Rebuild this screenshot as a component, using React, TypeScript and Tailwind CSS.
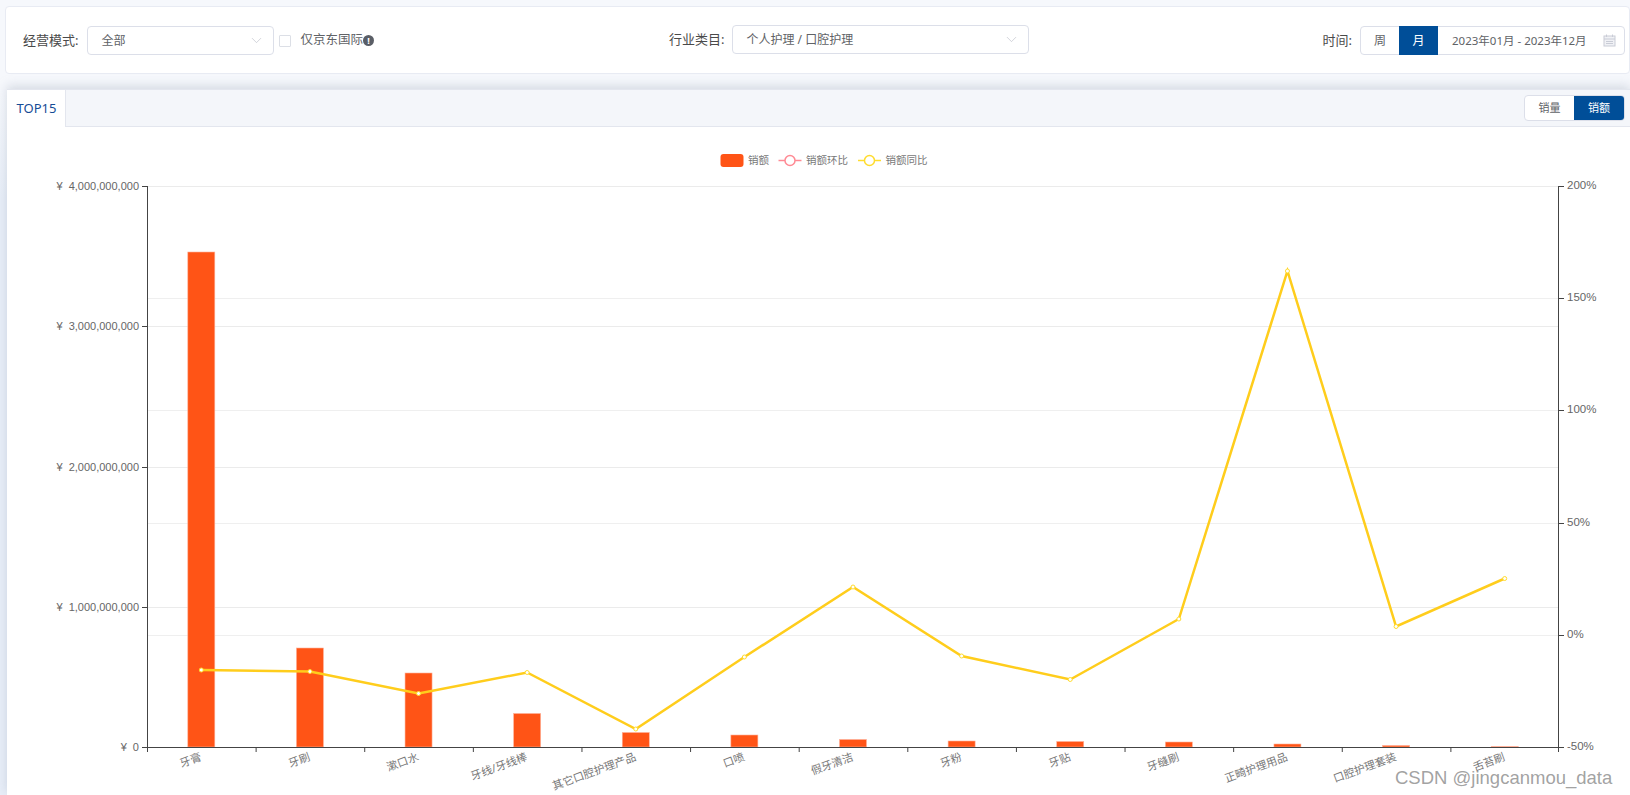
import { ChevronDown } from "lucide-react";

const cjk = `"Noto Sans", "Noto Sans CJK SC", sans-serif`;
const latin = `"Liberation Sans", "Noto Sans CJK SC", sans-serif`;

const plot = { left: 147, right: 1559, top: 186, bottom: 747 };
const leftStep = (plot.bottom - plot.top) / 4;
const rightStep = (plot.bottom - plot.top) / 5;

const categories = [
  { name: "牙膏", barTop: 252, y: 670 },
  { name: "牙刷", barTop: 648, y: 671.5 },
  { name: "漱口水", barTop: 673, y: 693.5 },
  { name: "牙线/牙线棒", barTop: 713.5, y: 672.5 },
  { name: "其它口腔护理产品", barTop: 732.5, y: 729 },
  { name: "口喷", barTop: 735, y: 657 },
  { name: "假牙清洁", barTop: 739.5, y: 587 },
  { name: "牙粉", barTop: 741, y: 656 },
  { name: "牙贴", barTop: 741.5, y: 679.5 },
  { name: "牙缝刷", barTop: 742, y: 619 },
  { name: "正畸护理用品", barTop: 744, y: 271 },
  { name: "口腔护理套装", barTop: 745.5, y: 626.5 },
  { name: "舌苔刷", barTop: 746.5, y: 578.5 },
];

const leftTicks = ["4,000,000,000", "3,000,000,000", "2,000,000,000", "1,000,000,000", "0"];
const rightTicks = ["200%", "150%", "100%", "50%", "0%", "-50%"];

function SalesChart() {
  const step = (plot.right - plot.left) / categories.length;
  const points = categories.map((c, i) => ({ x: plot.left + step * (i + 0.5), y: c.y }));

  return (
    <svg width="1630" height="668" viewBox="0 127 1630 668" style={{ fontFamily: cjk }}>
      {/* legend */}
      <rect x="720.5" y="154" width="23" height="13" rx="3" fill="#ff5416" />
      <text x="748" y="163.5" fontSize="10.5" fill="#777">销额</text>
      <path d="M778.5 160.5h23" stroke="#ff8a94" strokeWidth="1.5" />
      <circle cx="790" cy="160.5" r="5" fill="#fff" stroke="#ff8a94" strokeWidth="1.5" />
      <text x="806" y="163.5" fontSize="10.5" fill="#777">销额环比</text>
      <path d="M858 160.5h23" stroke="#ffdc2e" strokeWidth="1.5" />
      <circle cx="869.5" cy="160.5" r="5" fill="#fff" stroke="#ffdc2e" strokeWidth="1.5" />
      <text x="885.5" y="163.5" fontSize="10.5" fill="#777">销额同比</text>

      {/* grid */}
      {leftTicks.map((_, i) => {
        const y = Math.round(plot.top + i * leftStep) + 0.5;
        return i < 4 ? <path key={i} d={`M${plot.left} ${y}H${plot.right}`} stroke="#ebebeb" /> : null;
      })}
      {rightTicks.map((_, i) => {
        const y = Math.round(plot.top + i * rightStep) + 0.5;
        return i > 0 && i < 5 ? <path key={i} d={`M${plot.left} ${y}H${plot.right}`} stroke="#efefef" /> : null;
      })}

      {/* bars */}
      {categories.map((c, i) => (
        <rect
          key={c.name}
          x={plot.left + step * (i + 0.5) - 13.5}
          y={c.barTop}
          width="27"
          height={plot.bottom - c.barTop}
          fill="#ff5416"
          stroke="#ffb199"
          strokeWidth="0.6"
        />
      ))}

      {/* axes */}
      <path d={`M${plot.left + 0.5} ${plot.top}V${plot.bottom + 5}`} stroke="#444" fill="none" />
      <path d={`M${plot.right - 0.5} ${plot.top}V${plot.bottom + 5}`} stroke="#444" fill="none" />
      <path d={`M${plot.left} ${plot.bottom + 0.5}H${plot.right}`} stroke="#444" fill="none" />
      {leftTicks.map((t, i) => {
        const y = Math.round(plot.top + i * leftStep);
        return (
          <g key={t}>
            <path d={`M${plot.left - 5} ${y + 0.5}H${plot.left}`} stroke="#444" />
            <text x={plot.left - 8} y={y + 4} fontSize="11" fill="#666" textAnchor="end" style={{ fontFamily: latin, whiteSpace: "pre" }}>
              {"¥  " + t}
            </text>
          </g>
        );
      })}
      {rightTicks.map((t, i) => {
        const y = Math.round(plot.top + i * rightStep);
        return (
          <g key={t}>
            <path d={`M${plot.right} ${y + 0.5}H${plot.right + 5}`} stroke="#444" />
            <text x={plot.right + 8} y={y + 3} fontSize="11.5" fill="#666" style={{ fontFamily: latin }}>{t}</text>
          </g>
        );
      })}
      {categories.map((c, i) => {
        const x = plot.left + step * i;
        return <path key={c.name} d={`M${x + 0.5} ${plot.bottom}V${plot.bottom + 5}`} stroke="#444" />;
      })}
      {categories.map((c, i) => {
        const x = plot.left + step * (i + 0.5);
        return (
          <text
            key={c.name}
            x={x + 1}
            y={plot.bottom + 13}
            fontSize="11"
            fill="#777"
            textAnchor="end"
            transform={`rotate(-20 ${x + 1} ${plot.bottom + 13})`}
          >
            {c.name}
          </text>
        );
      })}

      {/* line */}
      <polyline
        points={points.map((p) => `${p.x},${p.y}`).join(" ")}
        fill="none"
        stroke="#ffcd1c"
        strokeWidth="2.5"
      />
      {points.map((p, i) => (
        <circle key={i} cx={p.x} cy={p.y} r="2" fill="#fff" stroke="#ffdc2e" />
      ))}
    </svg>
  );
}

function Select({ value, className }: { value: string; className: string }) {
  return (
    <div className={`flex h-[29px] items-center justify-between rounded border border-[#dcdfe9] bg-white pl-[13px] pr-[8px] text-xs text-[#606266] ${className}`}>
      <span className="pt-[1px]">{value}</span>
      <ChevronDown size={17} strokeWidth={1} color="#c0c4cc" />
    </div>
  );
}

export default function App() {
  return (
    <div
      className="relative h-[795px] w-[1630px] overflow-hidden bg-[linear-gradient(#f6f8fc_0%,#f6f8fc_12%,#e8eef8_25%,#e8eef8_100%)]"
      style={{ fontFamily: cjk }}
    >
      <header className="ml-[5px] mt-[6px] flex h-[68px] w-[1625px] items-center rounded-sm border border-[#e8ebf3] bg-white pl-[17px] pr-[4px] pt-[1px] text-[#4a4a4a]">
        <label className="text-[13px]">经营模式:</label>
        <Select value="全部" className="ml-[9px] w-[187px]" />
        <span className="ml-[5px] h-3 w-3 rounded-[1px] border border-[#dcdfe6]" />
        <span className="ml-[9px] text-[12.5px] text-[#606266]">仅京东国际</span>
        <span className="flex h-[11px] w-[11px] items-center justify-center rounded-full bg-[#5a5e66] text-[9px] font-bold leading-none text-white">!</span>

        <label className="mb-[2px] ml-[295px] text-[13px]">行业类目:</label>
        <Select value="个人护理 / 口腔护理" className="mb-[2px] ml-2 w-[297px]" />

        <label className="ml-auto text-[13px]">时间:</label>
        <div className="ml-2 flex h-[29px] w-[265px] items-center rounded border border-[#dcdfe9] bg-white text-xs text-[#606266]">
          <span className="w-[38px] text-center">周</span>
          <span className="flex h-[29px] w-[39px] items-center justify-center bg-[#004e98] text-white">月</span>
          <span className="ml-[14px] text-[11.5px]">2023年01月 - 2023年12月</span>
          <svg className="ml-auto mr-2" width="13" height="13" viewBox="0 0 13 13" fill="none" stroke="#c9ccd6">
            <rect x="1" y="2" width="11" height="10" fill="#f0f1f5" />
            <path d="M1 5h11M3.5 0.5v2.5M9.5 0.5v2.5M3 7.5h7M3 9.5h7" />
          </svg>
        </div>
      </header>

      <section className="ml-[7px] mt-[15px] w-[1623px] bg-white shadow-[0_-3px_10px_rgba(150,160,180,0.35)]">
        <div className="flex h-[38px] items-stretch justify-between border-y border-[#e3e6ee] bg-[#f4f6fa] pr-[5px]">
          <div className="-mb-px flex w-[59px] items-center justify-center border-r border-[#e3e6ee] bg-white pl-[1px] text-[13px] text-[#154c96]">TOP15</div>
          <div className="flex items-center">
            <div className="flex h-[26px] w-[101px] overflow-hidden rounded border border-[#dcdfe9] bg-white text-[11px]">
              <span className="flex w-[49px] items-center justify-center text-[#606266]">销量</span>
              <span className="flex flex-1 items-center justify-center bg-[#004e98] text-white">销额</span>
            </div>
          </div>
        </div>
        <div className="-ml-[7px]">
          <SalesChart />
        </div>
      </section>

      <div className="absolute left-[1395px] top-[766px] text-[18.5px] leading-6 text-[#8a8a8a]/80" style={{ fontFamily: `"Liberation Sans", sans-serif` }}>
        CSDN @jingcanmou_data
      </div>
    </div>
  );
}
